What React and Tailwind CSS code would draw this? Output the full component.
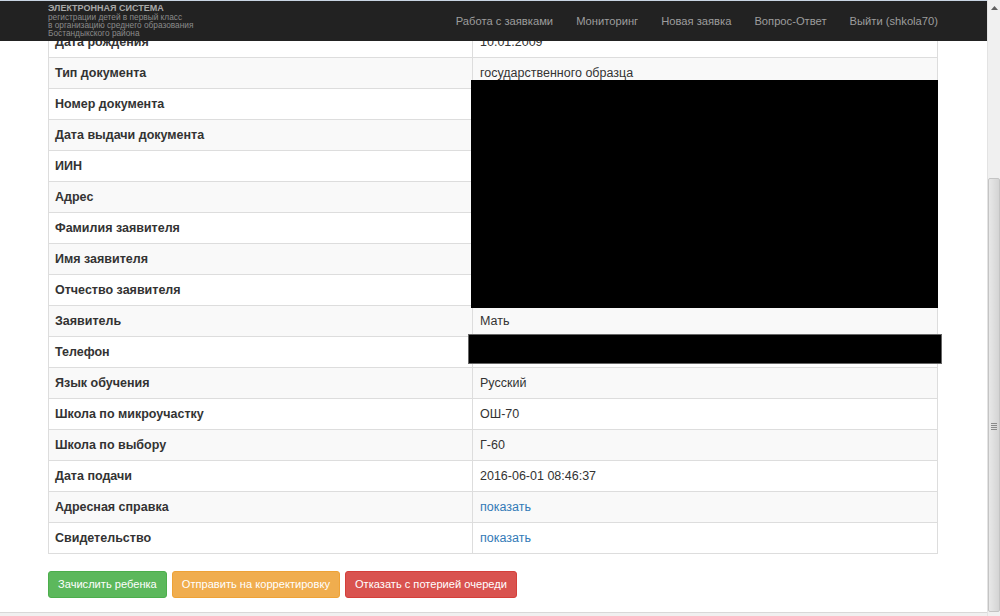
import React from 'react';

const rows = [
  { label: 'Дата рождения', value: '10.01.2009' },
  { label: 'Тип документа', value: 'государственного образца' },
  { label: 'Номер документа', value: '' },
  { label: 'Дата выдачи документа', value: '' },
  { label: 'ИИН', value: '' },
  { label: 'Адрес', value: '' },
  { label: 'Фамилия заявителя', value: '' },
  { label: 'Имя заявителя', value: '' },
  { label: 'Отчество заявителя', value: '' },
  { label: 'Заявитель', value: 'Мать' },
  { label: 'Телефон', value: '' },
  { label: 'Язык обучения', value: 'Русский' },
  { label: 'Школа по микроучастку', value: 'ОШ-70' },
  { label: 'Школа по выбору', value: 'Г-60' },
  { label: 'Дата подачи', value: '2016-06-01 08:46:37' },
  { label: 'Адресная справка', value: 'показать', link: true },
  { label: 'Свидетельство', value: 'показать', link: true },
];

const navLinks = ['Работа с заявками', 'Мониторинг', 'Новая заявка', 'Вопрос-Ответ', 'Выйти (shkola70)'];

export default function App() {
  return (
    <div className="flex h-[616px] w-[1000px] overflow-hidden bg-white font-['Liberation_Sans',Arial,sans-serif] text-[#333]">
      <div className="relative flex flex-1 flex-col overflow-hidden">
        {/* Navbar (fixed, over content) */}
        <div className="absolute left-0 right-0 top-0 z-10 flex h-[41px] items-center justify-between border-t border-[#c9d5e3] bg-[#222] pl-[48px] pr-[49px]">
          <div className="flex flex-col self-start pt-[2px]">
            <span className="text-[9px] font-bold leading-[10px] text-[#a8a8a8]">ЭЛЕКТРОННАЯ СИСТЕМА</span>
            <span className="text-[8.3px] leading-[8px] text-[#8a8a8a]">регистрации детей в первый класс</span>
            <span className="text-[8.3px] leading-[8px] text-[#8a8a8a]">в организацию среднего образования</span>
            <span className="text-[8.3px] leading-[8px] text-[#8a8a8a]">Бостандыкского района</span>
          </div>
          <nav className="flex gap-[23px] text-[11.2px] text-[#9d9d9d]">
            {navLinks.map((l) => (
              <span key={l}>{l}</span>
            ))}
          </nav>
        </div>

        {/* Content */}
        <div className="flex-1 pl-[48px] pt-[25px]">
          <div className="w-[890px] border border-[#ddd] text-[12.5px] leading-[20px]">
            {rows.map((r, i) => (
              <div
                key={r.label}
                className={`flex h-[31px] border-[#ddd] ${i > 0 ? 'border-t' : ''} ${i % 2 === 1 ? 'bg-[#f9f9f9]' : 'bg-white'}`}
              >
                <div className="flex w-[424px] items-center border-r border-[#ddd] px-[6px] font-bold">{r.label}</div>
                <div className={`flex flex-1 items-center px-[7px] ${r.link ? 'text-[#337ab7]' : ''}`}>{r.value}</div>
              </div>
            ))}
          </div>
          <div className="mt-[17px] flex gap-[5px] text-[11.1px]">
            <button className="h-[27px] rounded-[3px] border border-[#4cae4c] bg-[#5cb85c] px-[9px] text-white">Зачислить ребенка</button>
            <button className="h-[27px] rounded-[3px] border border-[#eea236] bg-[#f0ad4e] px-[9px] text-white">Отправить на корректировку</button>
            <button className="h-[27px] rounded-[3px] border border-[#d43f3a] bg-[#d9534f] px-[9px] text-white">Отказать с потерией очереди</button>
          </div>
        </div>

        {/* redaction boxes */}
        <div className="absolute left-[471px] top-[80px] h-[228px] w-[467px] bg-black" />
        <div className="absolute left-[468px] top-[334px] h-[30px] w-[474px] border border-[#666] bg-black" />

        <div className="h-[4px] border-t border-[#d8d8d8] bg-[#f0f0f0]" />
      </div>

      {/* Scrollbar */}
      <div className="flex w-[13px] flex-col border-l border-[#e3e3e3] bg-[#f0f0f0]">
        <div className="flex h-[16px] items-center justify-center">
          <svg width="7" height="4" viewBox="0 0 7 4"><path d="M0 4 L3.5 0 L7 4 Z" fill="#606060" /></svg>
        </div>
        <div className="h-[162px]" />
        <div className="flex flex-1 flex-col items-center rounded-[2px] border border-[#c4c4c4] bg-gradient-to-r from-[#e8e8e8] to-[#d4d4d4] pt-[244px]">
          <div className="flex flex-col gap-[1px]">
            <div className="h-[1px] w-[6px] bg-[#8a8a8a]" />
            <div className="h-[1px] w-[6px] bg-[#8a8a8a]" />
            <div className="h-[1px] w-[6px] bg-[#8a8a8a]" />
            <div className="h-[1px] w-[6px] bg-[#8a8a8a]" />
          </div>
        </div>
        <div className="h-[4px]" />
      </div>
    </div>
  );
}
